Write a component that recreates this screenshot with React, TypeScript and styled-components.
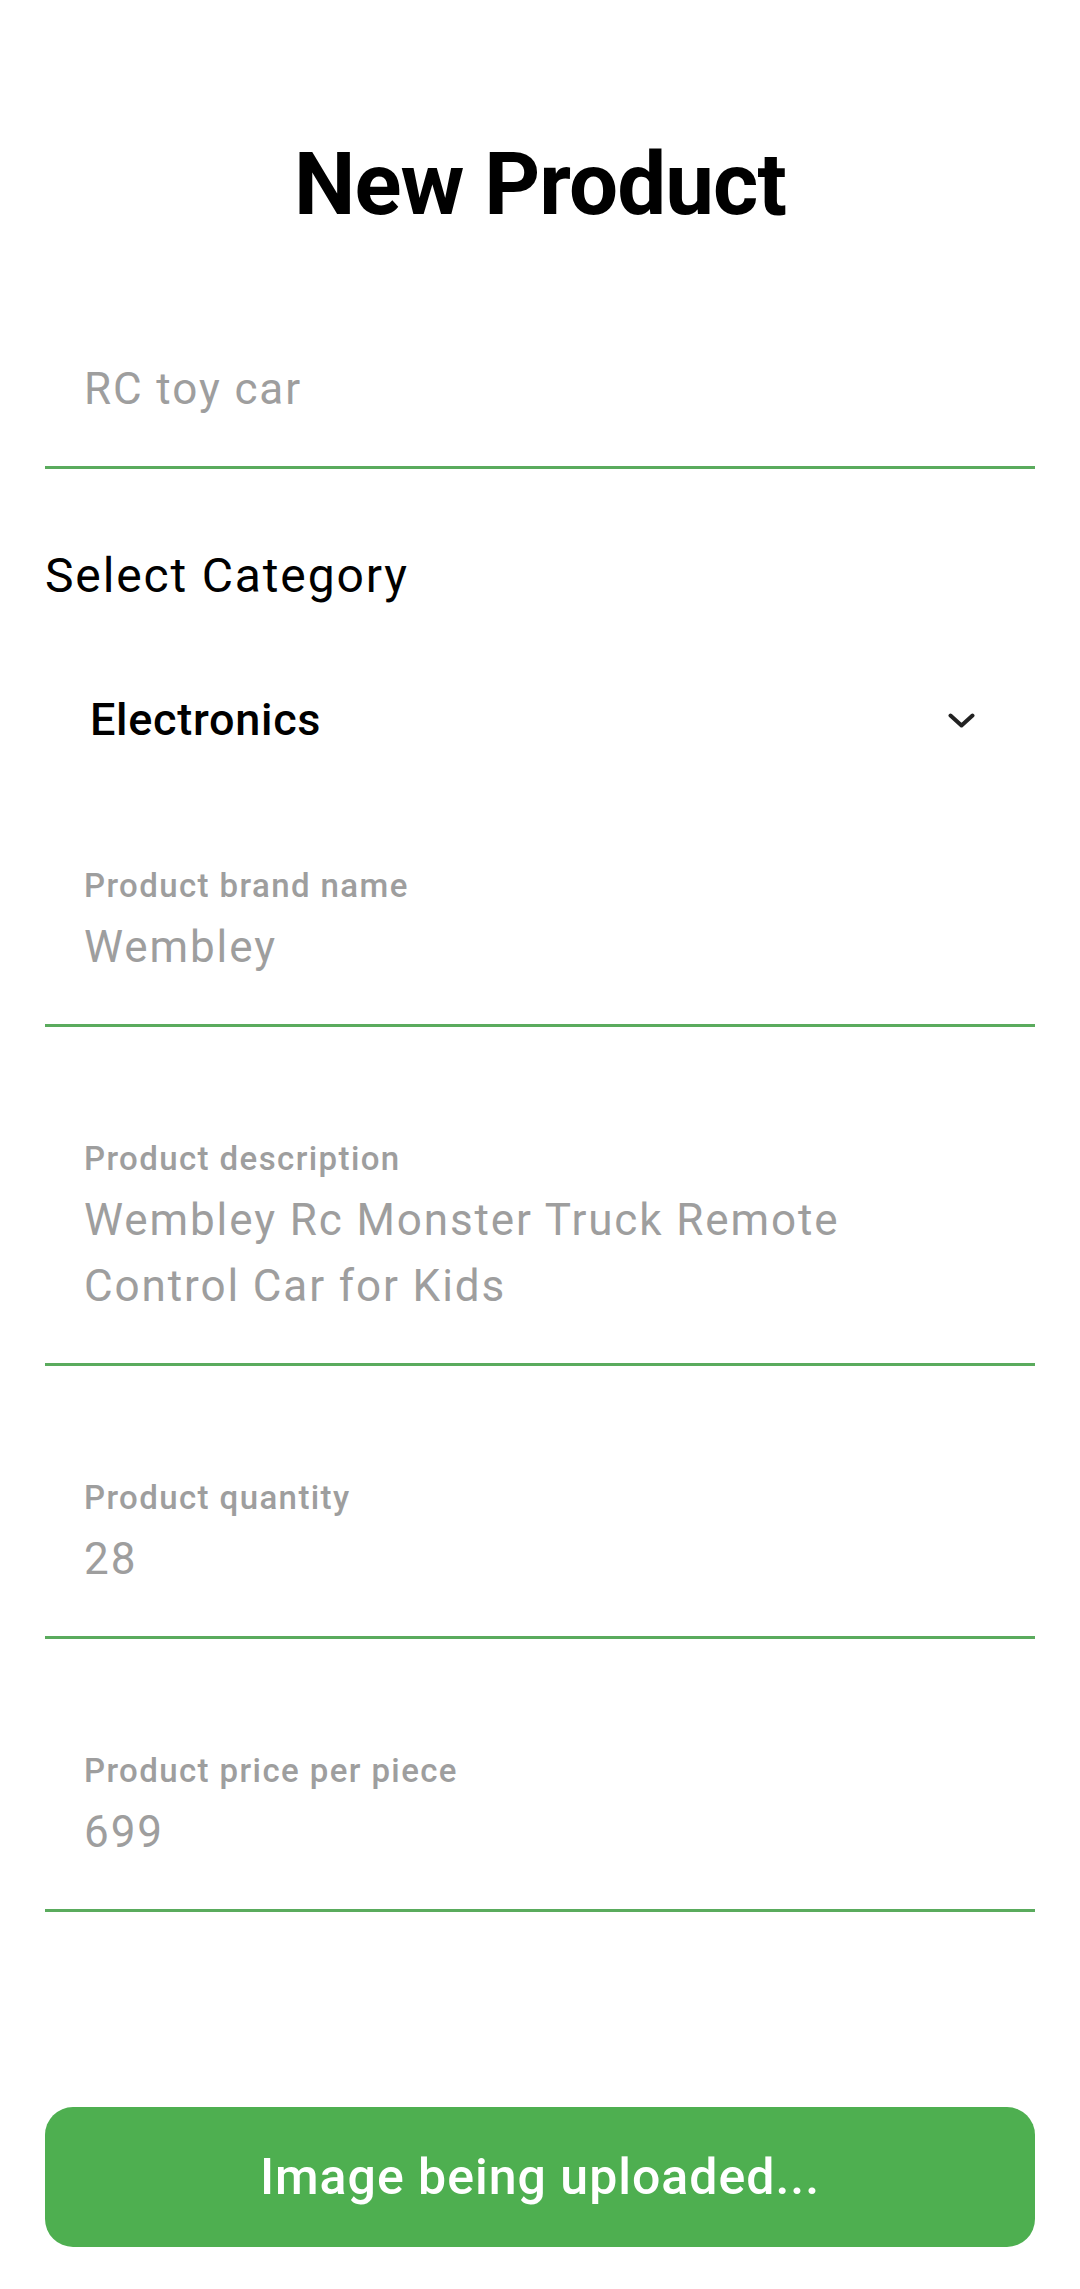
import React from "react";
import styled, { createGlobalStyle } from "styled-components";

const GlobalStyle = createGlobalStyle`
  html, body {
    margin: 0;
    padding: 0;
    background: #ffffff;
  }
  body {
    font-family: Roboto, "Noto Sans", "Liberation Sans", sans-serif;
    -webkit-font-smoothing: antialiased;
  }
  * { box-sizing: border-box; }
`;

const Page = styled.main`
  display: flex;
  flex-direction: column;
  padding: 0 45px 42px;
  min-height: 2289px;
`;

const Title = styled.h1`
  margin: 134px 0 0;
  height: 100px;
  font-size: 87px;
  line-height: 100px;
  font-weight: 700;
  color: #000;
  text-align: center;
  letter-spacing: -0.9px;
`;

const Field = styled.div<{ $top: number }>`
  display: flex;
  flex-direction: column;
  gap: 8px;
  margin-top: ${(p) => p.$top}px;
  padding: 0 100px 44px 39px;
  border-bottom: 3px solid #5aab5d;
`;

const FieldLabel = styled.span`
  font-size: 33px;
  line-height: 40px;
  font-weight: 500;
  color: #9e9e9e;
  letter-spacing: 1.4px;
`;

const FieldValue = styled.span`
  font-size: 44px;
  line-height: 66px;
  font-weight: 400;
  color: #9e9e9e;
  letter-spacing: 1.9px;
`;

const SectionLabel = styled.h2`
  margin: 79px 0 0;
  font-size: 48px;
  line-height: 56px;
  font-weight: 400;
  color: #000;
  letter-spacing: 1.85px;
`;

const Dropdown = styled.div`
  margin-top: 56px;
  height: 120px;
  display: flex;
  align-items: center;
  justify-content: space-between;
  padding: 0 60px 0 45px;
`;

const DropdownText = styled.span`
  font-size: 45px;
  line-height: 56px;
  font-weight: 500;
  color: #000;
  letter-spacing: 0.7px;
`;

const Chevron = styled.svg`
  width: 27px;
  height: 15px;
  display: block;
`;

const UploadButton = styled.button`
  margin-top: 195px;
  height: 140px;
  width: 100%;
  border: none;
  border-radius: 28px;
  background: #4eaf50;
  color: #ffffff;
  font-family: Roboto, "Noto Sans", "Liberation Sans", sans-serif;
  font-size: 50px;
  font-weight: 500;
  letter-spacing: 1px;
  display: flex;
  align-items: center;
  justify-content: center;
  cursor: pointer;
`;

type FieldProps = { label?: string; value: string; top: number };

const TextField: React.FC<FieldProps> = ({ label, value, top }) => (
  <Field $top={top}>
    {label && <FieldLabel>{label}</FieldLabel>}
    <FieldValue>{value}</FieldValue>
  </Field>
);

export default function App() {
  return (
    <>
      <GlobalStyle />
      <Page>
        <Title>New Product</Title>
        <TextField top={122} value="RC toy car" />
        <SectionLabel>Select Category</SectionLabel>
        <Dropdown>
          <DropdownText>Electronics</DropdownText>
          <Chevron viewBox="0 0 27 15" fill="none">
            <polyline
              points="2.5,2.5 13.5,12.5 24.5,2.5"
              stroke="#222"
              strokeWidth="4"
              strokeLinecap="round"
              strokeLinejoin="round"
            />
          </Chevron>
        </Dropdown>
        <TextField top={86} label="Product brand name" value="Wembley" />
        <TextField
          top={112}
          label="Product description"
          value="Wembley Rc Monster Truck Remote Control Car for Kids"
        />
        <TextField top={112} label="Product quantity" value="28" />
        <TextField top={112} label="Product price per piece" value="699" />
        <UploadButton>Image being uploaded...</UploadButton>
      </Page>
    </>
  );
}
